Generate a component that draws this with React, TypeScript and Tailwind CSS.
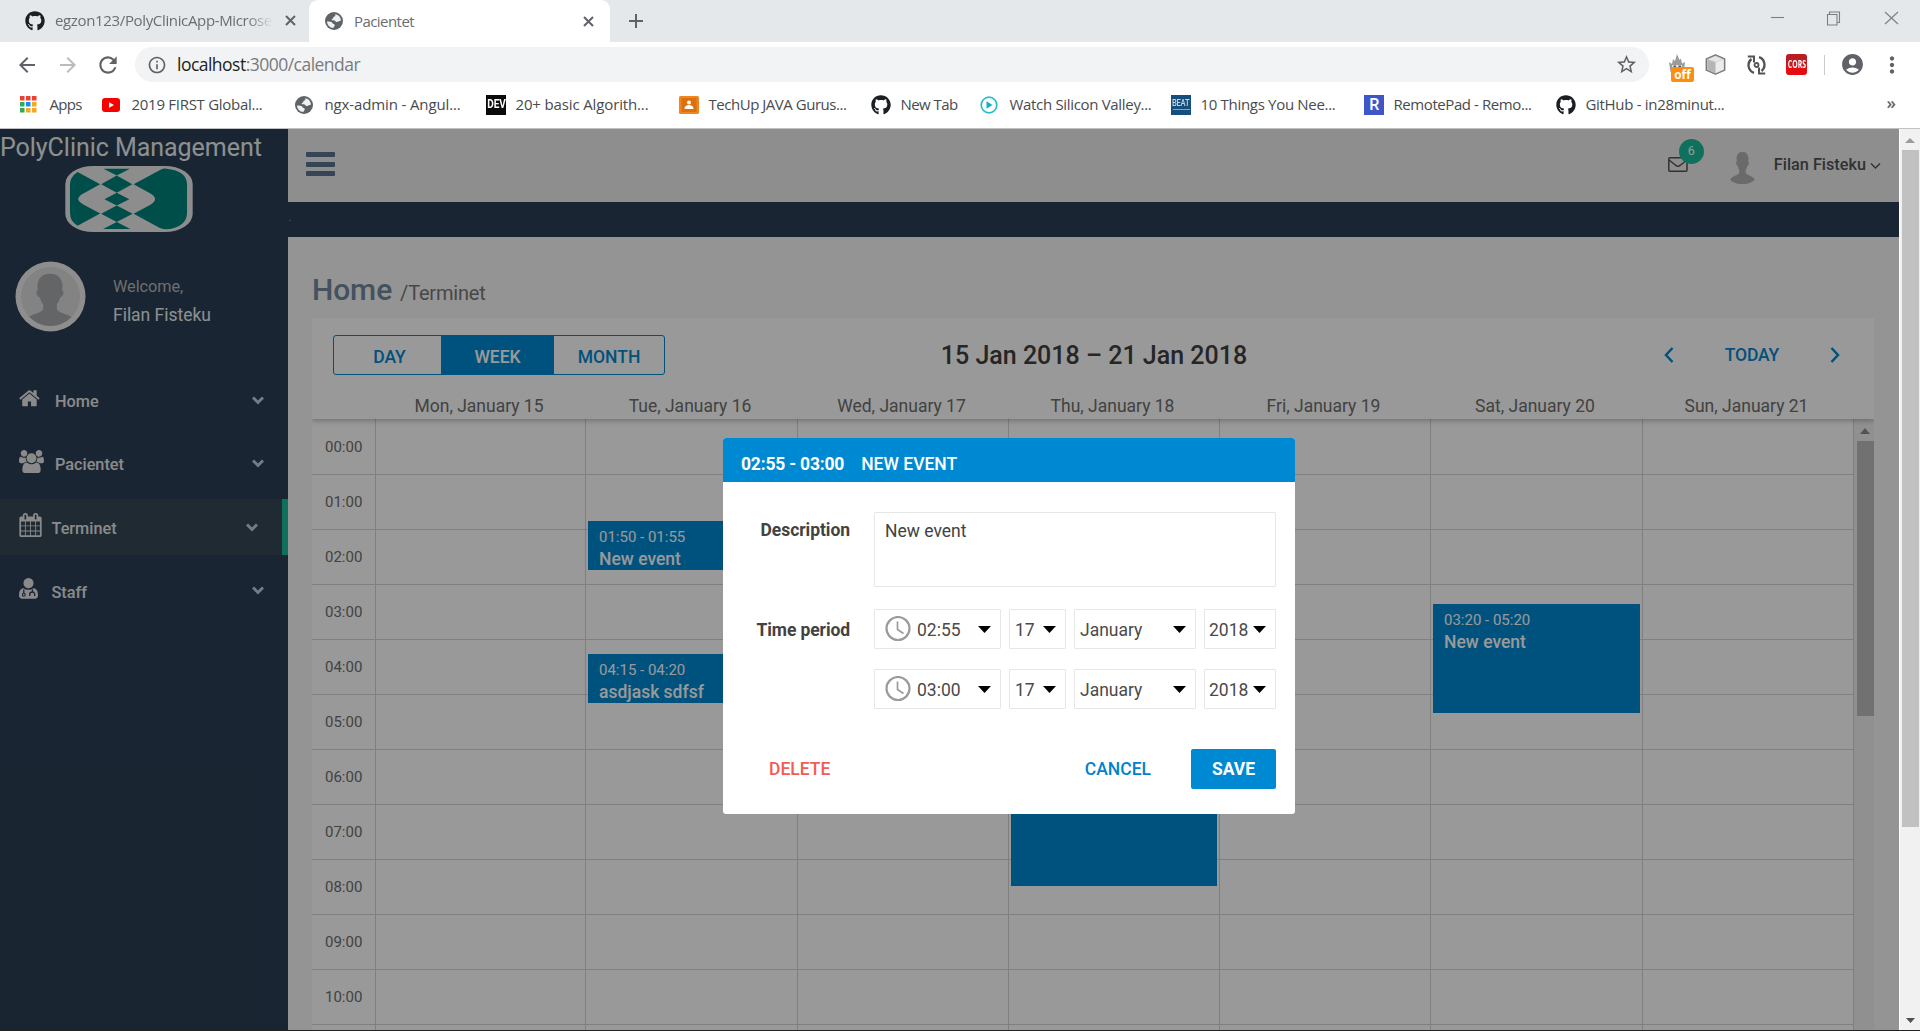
import React from "react";
import { MdAccountCircle, MdArrowBack, MdArrowForward, MdInfoOutline, MdMoreVert, MdRefresh, MdStarBorder } from "react-icons/md";
import { FaGithub } from "react-icons/fa";

/* ---------- browser chrome ---------- */

const CrossIcon = () => (
  <svg width="11" height="11" viewBox="0 0 11 11" stroke="#5f6368" strokeWidth="2" fill="none">
    <path d="M1 1l9 9M10 1l-9 9" />
  </svg>
);

const GlobeIcon = () => (
  <svg className="shrink-0" width="18" height="18" viewBox="0 0 18 18">
    <circle cx="9" cy="9" r="9" fill="#5f6368" />
    <path d="M9.500 2.200C11 3 10.500 4 9.300 4.600C8 5.200 8.600 6.400 7.400 6.900C6 7.400 6.400 8.300 8 8.300C10.500 8.300 10.200 10 12 10C13.500 10 14 9 16 8.600A7.200 7.200 0 0 0 9.500 2.200Z" fill="#eef0f1" />
    <path d="M1.900 9.600C4 9.800 6.800 9.600 7.400 11C7.900 12.200 9.800 11.800 9.800 13.200C9.800 14.400 8.600 14.600 8.400 16.100A7.200 7.200 0 0 1 1.900 9.600Z" fill="#eef0f1" />
  </svg>
);

function TabStrip() {
  return (
    <div className="flex h-[42px] bg-[#e5e8eb] text-[15px] text-[#6a6d72]">
      <div className="flex h-[41px] w-[309px] items-center pl-[25px]">
        <FaGithub className="size-[20px] shrink-0 text-[#1b1f23]" />
        <span className="ml-[10px] w-[218px] overflow-hidden whitespace-nowrap tracking-[-0.35px] [mask-image:linear-gradient(to_right,black_88%,transparent)]">
          egzon123/PolyClinicApp-Microse
        </span>
        <span className="ml-[12px]">
          <CrossIcon />
        </span>
      </div>
      <div className="flex h-[42px] w-[301px] items-center rounded-t-[9px] bg-white pl-[16px]">
        <GlobeIcon />
        <span className="ml-[11px] w-[229px] tracking-[-0.56px]">Pacientet</span>
        <CrossIcon />
      </div>
      <div className="flex h-[41px] flex-1 items-center pl-[19px]">
        <svg width="14" height="14" viewBox="0 0 14 14" stroke="#5f6368" strokeWidth="2" fill="none">
          <path d="M7 0v14M0 7h14" />
        </svg>
      </div>
      <div className="flex h-[36px] w-[149px] items-center text-[#7b7e82]">
        <svg width="128" height="16" viewBox="0 0 128 16" fill="none" stroke="currentColor" strokeWidth="1.1">
          <path d="M0 7.500h13" />
          <path d="M56.500 4.500h9.500v10.500h-9.500zM58.500 4.500v-2.500h10v10.500h-2.500" />
          <path d="M114 2l13 12M127 2l-13 12" />
        </svg>
      </div>
    </div>
  );
}

const FlameIcon = () => (
  <div className="relative h-[36px] w-[25px]">
    <svg className="absolute left-0 top-[7px]" width="17" height="18" viewBox="0 0 17 18">
      <path d="M1.500 18L0 8l3 2 1-5 2 2 2-7 2.500 6 1.500-1.500 1 5 3-1.500L15 18z" fill="#9a9c9e" />
      <path d="M3 11h10v7H3z" fill="#e2e2e2" />
      <path d="M4.500 11.500h2.500v3h-2.500zM9.500 11.500h2.500v3h-2.500z" fill="#55585c" />
    </svg>
    <span className="absolute left-[2px] top-[20px] flex h-[15px] w-[23px] items-center justify-center rounded-[2px] bg-[#ff8c0a] font-['Open_Sans'] text-[12px] leading-[15px] font-bold text-white">
      off
    </span>
  </div>
);

const CubeIcon = () => (
  <svg width="21" height="21" viewBox="0 0 21 21">
    <path d="M10.500 .8l9.200 4v11.400l-9.200 4-9.200-4V4.800z" fill="#cfcfcf" stroke="#7a7a7a" strokeWidth="1.400" strokeLinejoin="round" />
    <path d="M10.500 2.200l7 3-6 2.500-8-2.500z" fill="#e6e6e6" />
    <path d="M11 8.500l7.500-3v10l-7.500 3.400z" fill="#ececec" />
    <path d="M10 8.500l-7.500-3v10l7.500 3.400z" fill="#b5b5b5" />
  </svg>
);

const SyncIcon = () => (
  <svg width="19" height="20" viewBox="0 0 19 20" fill="none" stroke="#515357" strokeWidth="2.300">
    <path d="M7 17.800A8 8 0 0 1 4.500 4M12 2.200A8 8 0 0 1 14.500 16" />
    <path d="M.8 1.500h6.200v6M18.200 18.500H12v-6" strokeWidth="2" />
    <circle cx="9.500" cy="10" r="2" strokeWidth="1.800" />
  </svg>
);

function Toolbar() {
  return (
    <div className="flex h-[44px] items-center bg-white pt-px text-[#5f6368]">
      <MdArrowBack className="ml-[15px] size-[24px]" />
      <MdArrowForward className="ml-[17px] size-[24px] text-[#b9bbbe]" />
      <MdRefresh className="ml-[15px] size-[26px]" />
      <div className="ml-[14px] flex h-[35px] w-[1514px] items-center rounded-full bg-[#f1f3f4]">
        <MdInfoOutline className="ml-[12px] size-[20px]" />
        <div className="ml-[10px] flex-1 text-[17.5px] tracking-[-0.52px] text-[#787b7f]">
          <span className="text-[#1e1f21]">localhost</span>:3000/calendar
        </div>
        <MdStarBorder className="mr-[11px] size-[23px]" />
      </div>
      <div className="ml-[20px]">
        <FlameIcon />
      </div>
      <div className="ml-[11px]">
        <CubeIcon />
      </div>
      <div className="ml-[21px]">
        <SyncIcon />
      </div>
      <div className="ml-[20px] flex h-[21px] w-[21px] items-center justify-center rounded-[3px] bg-gradient-to-b from-[#b91c22] from-40% to-[#e60b12] to-60%">
        <span className="scale-x-[.65] font-['Open_Sans'] text-[10.500px] font-bold text-white">CORS</span>
      </div>
      <div className="ml-[17px] h-[20px] w-px bg-[#c9cbce]" />
      <MdAccountCircle className="ml-[15px] size-[25px]" />
      <MdMoreVert className="ml-[14px] size-[26px]" />
    </div>
  );
}

const AppsIcon = () => (
  <svg width="17" height="17" viewBox="0 0 17 17">
    {["#ea4335", "#ea4335", "#ea4335", "#34a853", "#1a8cf0", "#f5a623", "#34a853", "#f5a623", "#f5a623"].map((c, i) => (
      <rect key={i} x={(i % 3) * 6} y={Math.floor(i / 3) * 6} width="4.500" height="4.500" fill={c} />
    ))}
  </svg>
);
const YoutubeIcon = () => (
  <svg width="18" height="14" viewBox="0 0 18 14">
    <rect width="18" height="14" rx="3" fill="#f60000" />
    <path d="M7 4.200l5 2.800-5 2.800z" fill="#fff" />
  </svg>
);
const ClassroomIcon = () => (
  <svg width="20" height="18" viewBox="0 0 20 18">
    <rect width="20" height="18" rx="1.500" fill="#ef8520" />
    <rect x="2.500" y="2" width="15" height="14" fill="#dd6f0c" />
    <circle cx="10" cy="6.500" r="2" fill="#fff" />
    <path d="M5.500 13c0-3 2-4 4.500-4s4.500 1 4.500 4z" fill="#fff" />
  </svg>
);
const PlayIcon = () => (
  <svg width="18" height="18" viewBox="0 0 18 18">
    <circle cx="9" cy="9" r="7.800" fill="none" stroke="#27bccb" strokeWidth="1.700" />
    <path d="M6.500 5.200l6 3.800-6 3.800z" fill="#12b2c4" />
  </svg>
);
const DevIcon = () => (
  <span className="flex size-[20px] items-center justify-center bg-[#0a0a0a]">
    <span className="scale-x-[.8] font-['Roboto'] text-[12.500px] font-bold text-white">DEV</span>
  </span>
);
const BeatIcon = () => (
  <span className="flex size-[20px] flex-col items-center justify-center bg-[#174f7c]">
    <span className="scale-x-90 font-['Roboto'] text-[8.500px] leading-[9px] font-medium text-[#c3d6e2]">BEAT</span>
    <span className="mt-px h-px w-[17px] bg-[#a7a55b]" />
  </span>
);
const RIcon = () => (
  <span className="flex size-[20px] items-center justify-center bg-[#3f56c8] font-['Roboto'] text-[16px] font-medium text-white">R</span>
);

function Bookmark({ icon, label, className }: { icon: React.ReactNode; label: string; className: string }) {
  return (
    <div className={`flex shrink-0 items-center ${className}`}>
      <span className="flex w-[20px] justify-start">{icon}</span>
      <span className="ml-[9.500px] whitespace-nowrap">{label}</span>
    </div>
  );
}

function Bookmarks() {
  const github = <FaGithub className="size-[20px] text-[#1b1f23]" />;
  return (
    <div className="flex h-[43px] items-center border-b border-[#bfc1c3] bg-white pb-[5px] pl-[20px] text-[15px] text-[#484b4f]">
      <Bookmark className="w-[82px] tracking-[-0.7px]" icon={<AppsIcon />} label="Apps" />
      <Bookmark className="w-[193px] tracking-[-0.28px]" icon={<YoutubeIcon />} label="2019 FIRST Global..." />
      <Bookmark className="w-[191px] tracking-[-0.13px]" icon={<GlobeIcon />} label="ngx-admin - Angul..." />
      <Bookmark className="w-[193px] tracking-[-0.14px]" icon={<DevIcon />} label="20+ basic Algorith..." />
      <Bookmark className="w-[192px] tracking-[-0.47px]" icon={<ClassroomIcon />} label="TechUp JAVA Gurus..." />
      <Bookmark className="w-[109px] tracking-[-0.57px]" icon={github} label="New Tab" />
      <Bookmark className="w-[191px] tracking-[-0.32px]" icon={<PlayIcon />} label="Watch Silicon Valley..." />
      <Bookmark className="w-[193px] tracking-[-0.31px]" icon={<BeatIcon />} label="10 Things You Nee..." />
      <Bookmark className="w-[192px] tracking-[-0.42px]" icon={<RIcon />} label="RemotePad - Remo..." />
      <Bookmark className="flex-1 tracking-[-0.31px]" icon={github} label="GitHub - in28minut..." />
      <span className="mr-[24px] pb-[3px] text-[17px] font-semibold text-[#5f6368]">»</span>
    </div>
  );
}

/* ---------- sidebar ---------- */

const ClinicLogo = () => (
  <svg width="128" height="66" viewBox="195 122 384 199">
    <rect x="195" y="122" width="384" height="199" rx="84" ry="54" fill="#ececec" />
    <g fill="#00827c">
      <path d="M232 140L300 177L248 206Q220 222 248 237L300 265L232 302Q209 290 209 262V178Q209 155 232 140Z" />
      <path d="M310 130H390L350 151Z" />
      <path d="M350 151L397 177L350 203L303 177Z" />
      <path d="M350 203L388 222L350 241L313 222Z" />
      <path d="M350 241L398 266L350 291L303 266Z" />
      <path d="M350 291L391 312H309Z" />
      <path d="M401 177L482 133Q490 129 500 130Q562 136 562 178V262Q562 306 500 313Q490 313 480 309L401 266L453 238Q478 222 453 206Z" />
    </g>
  </svg>
);

const Silhouette = ({ fill }: { fill: string }) => (
  <path
    fill={fill}
    d="M50 12C37 12 28 20 28 34C28 37 29 39 29 41C26 41 26 45 27 48C28 52 30 53 32 53C34 60 36 63 38 65V74C34 82 16 81 4 94C22 112 78 112 96 94C84 81 66 82 62 74V65C64 63 66 60 68 53C70 53 72 52 73 48C74 45 74 41 71 41C71 39 72 37 72 34C72 20 63 12 50 12Z"
  />
);

const Avatar = () => (
  <svg width="71" height="71" viewBox="0 0 71 71">
    <circle cx="35.500" cy="35.500" r="35" fill="#ededed" />
    <circle cx="35.500" cy="35.500" r="29.500" fill="#dadada" />
    <clipPath id="avatar-face">
      <circle cx="35.500" cy="35.500" r="29.500" />
    </clipPath>
    <g clipPath="url(#avatar-face)">
      <g transform="translate(6.500 6) scale(.57 .57)">
        <Silhouette fill="#a7a9ab" />
      </g>
    </g>
  </svg>
);

const HomeIcon = () => (
  <svg width="22.500" height="22.500" viewBox="0 0 1792 1792" fill="currentColor">
    <path d="M1408 992v480q0 26-19 45t-45 19h-384v-384h-256v384h-384q-26 0-45-19t-19-45v-480q0-1 .5-3t.5-3l575-474 575 474q1 2 1 6zm223-69l-62 74q-8 9-21 11h-3q-13 0-21-7l-692-577-692 577q-12 8-24 7-13-2-21-11l-62-74q-8-10-7-23.500t11-21.500l719-599q32-26 76-26t76 26l244 204v-195q0-14 9-23t23-9h192q14 0 23 9t9 23v408l219 182q10 8 11 21.500t-7 23.500z" />
  </svg>
);
const GroupIcon = () => (
  <svg width="25" height="23.300" viewBox="-64 0 1920 1792" fill="currentColor">
    <path transform="translate(-64 0)" d="M593 896q-162 5-265 128h-134q-82 0-138-40.500t-56-118.500q0-353 124-353 6 0 43.500 21t97.500 42.500 119 21.500q67 0 133-23-5 37-5 66 0 139 81 256zm1071 637q0 120-73 189.500t-194 69.500h-874q-121 0-194-69.500t-73-189.500q0-53 3.500-103.500t14-109 26.500-108.500 43-97.500 62-81 85.500-53.500 111.500-20q10 0 43 21.500t73 48 107 48 135 21.500 135-21.500 107-48 73-48 43-21.500q61 0 111.500 20t85.500 53.500 62 81 43 97.500 26.500 108.500 14 109 3.500 103.500zm-1024-1277q0 106-75 181t-181 75-181-75-75-181 75-181 181-75 181 75 75 181zm704 384q0 159-112.500 271.500t-271.500 112.500-271.500-112.500-112.500-271.500 112.500-271.500 271.500-112.500 271.500 112.500 112.500 271.500zm576 225q0 78-56 118.500t-138 40.500h-134q-103-123-265-128 81-117 81-256 0-29-5-66 66 23 133 23 59 0 119-21.500t97.500-42.500 43.500-21q124 0 124 353zm-128-609q0 106-75 181t-181 75-181-75-75-181 75-181 181-75 181 75 75 181z" />
  </svg>
);
const CalendarIcon = () => (
  <svg width="23" height="24" viewBox="64 0 1664 1792" fill="currentColor">
    <path d="M192 1664h288v-288h-288v288zm352 0h320v-288h-320v288zm-352-352h288v-320h-288v320zm352 0h320v-320h-320v320zm-352-384h288v-288h-288v288zm736 736h320v-288h-320v288zm-384-736h320v-288h-320v288zm768 736h288v-288h-288v288zm-384-352h320v-320h-320v320zm-352-864v-288q0-13-9.500-22.500t-22.500-9.500h-64q-13 0-22.500 9.500t-9.500 22.500v288q0 13 9.500 22.500t22.500 9.500h64q13 0 22.500-9.500t9.500-22.500zm736 864h288v-320h-288v320zm-384-384h320v-288h-320v288zm384 0h288v-288h-288v288zm32-480v-288q0-13-9.500-22.500t-22.500-9.500h-64q-13 0-22.500 9.500t-9.500 22.500v288q0 13 9.500 22.500t22.500 9.500h64q13 0 22.500-9.500t9.500-22.500zm384-64v1280q0 52-38 90t-90 38h-1408q-52 0-90-38t-38-90v-1280q0-52 38-90t90-38h128v-96q0-66 47-113t113-47h64q66 0 113 47t47 113v96h384v-96q0-66 47-113t113-47h64q66 0 113 47t47 113v96h128q52 0 90 38t38 90z" />
  </svg>
);
const DoctorIcon = () => (
  <svg width="19" height="21" viewBox="0 0 19 21" fill="none">
    <path d="M9.500 0a5 5 0 0 1 5 5.200c0 2.800-2.200 5-5 5s-5-2.200-5-5a5 5 0 0 1 5-5.200z" fill="currentColor" />
    <path d="M4.500 10.200c1.500 1 3 1.600 5 1.600s3.500-.6 5-1.600c3.500.3 4.500 3.500 4.500 7.300 0 2-1.200 3.200-3 3.200H3c-1.800 0-3-1.200-3-3.200 0-3.800 1-7 4.500-7.300z" fill="currentColor" />
    <path d="M4.800 11.500v4M13.500 11.500v2.800M10.700 18v-1.500a2.500 2.500 0 0 1 5 0V18" stroke="#2a3f54" strokeWidth="1.300" />
    <circle cx="4.800" cy="16.700" r="1.400" stroke="#2a3f54" strokeWidth="1.100" />
  </svg>
);

type MenuEntry = { label: string; icon: React.ReactNode; slot: string; active?: boolean };
const menu: MenuEntry[] = [
  { label: "Home", icon: <HomeIcon />, slot: "w-[36px]" },
  { label: "Pacientet", icon: <GroupIcon />, slot: "w-[36px]" },
  { label: "Terminet", icon: <CalendarIcon />, slot: "w-[32.500px]", active: true },
  { label: "Staff", icon: <DoctorIcon />, slot: "w-[32.500px]" },
];

function Sidebar() {
  return (
    <aside className="flex w-[288px] shrink-0 flex-col bg-[#2a3f54] text-[#ecf0f1]">
      <div className="pt-[4px] text-[25px] leading-[29px] tracking-[-0.04px] whitespace-nowrap">PolyClinic Management</div>
      <div className="mt-[4px] ml-[65px]">
        <ClinicLogo />
      </div>
      <div className="mt-[29px] flex h-[71px] pl-[15px]">
        <Avatar />
        <div className="ml-[27px] pt-[13px]">
          <div className="text-[16.25px] leading-[25px] tracking-[-0.05px] text-[#bab8b8]">Welcome,</div>
          <div className="mt-[2px] text-[17.500px] leading-[28px] tracking-[-0.02px]">Filan Fisteku</div>
        </div>
      </div>
      <nav className="mt-[40px] flex flex-col gap-[7.670px]">
        {menu.map((m) => (
          <div
            key={m.label}
            className={`flex h-[56px] items-center pl-[19px] text-[16.25px] font-medium text-[#e7e7e7] ${m.active ? "border-r-[6px] border-[#1abb9c] bg-[#344656]" : ""}`}
          >
            <span className={`flex ${m.slot} pb-[4px]`}>{m.icon}</span>
            <span className="flex-1 pt-[4px]">{m.label}</span>
            <svg className="mr-[24px]" width="12" height="9" viewBox="0 0 12 9" fill="none" stroke="#c4cfda" strokeWidth="3">
              <path d="M1 1.500l5 5 5-5" />
            </svg>
          </div>
        ))}
      </nav>
    </aside>
  );
}

/* ---------- top bar ---------- */

function TopBar() {
  return (
    <header className="flex h-[73px] items-center bg-[#ededed] pl-[18px]">
      <div className="mb-[3px] flex w-[29px] flex-col gap-[4.500px]">
        <span className="h-[5px] rounded-[1px] bg-[#5a738e]" />
        <span className="h-[5px] rounded-[1px] bg-[#5a738e]" />
        <span className="h-[5px] rounded-[1px] bg-[#5a738e]" />
      </div>
      <div className="flex-1" />
      <div className="relative mb-[2px] h-[15px] w-[20px]">
        <svg width="20" height="15" viewBox="0 0 20 15" fill="none" stroke="#515356" strokeWidth="1.500">
          <rect x=".8" y=".8" width="18.200" height="13.400" rx="1" />
          <path d="M1 3l7 5.500q2 1.300 4 0L19 3" />
        </svg>
        <span className="absolute -top-[18px] left-[11px] flex size-[25px] items-center justify-center rounded-full bg-[#1abb9c] text-[12.500px] text-white">6</span>
      </div>
      <svg className="mt-[4px] ml-[41px]" width="27" height="33" viewBox="0 10 100 97" preserveAspectRatio="none">
        <Silhouette fill="#b0b1b2" />
      </svg>
      <span className="ml-[18px] text-[16.25px] font-medium text-[#515356]">Filan Fisteku</span>
      <svg className="mr-[18px] ml-[4px]" width="11" height="8" viewBox="0 0 11 8" fill="none" stroke="#515356" strokeWidth="1.400">
        <path d="M1 1.500l4.500 4.500 4.500-4.500" />
      </svg>
    </header>
  );
}

/* ---------- calendar ---------- */

const hours = ["00:00", "01:00", "02:00", "03:00", "04:00", "05:00", "06:00", "07:00", "08:00", "09:00", "10:00"];
type CalEvent = { time?: string; title?: string; box: string };
const days: { label: string; width: string; events: CalEvent[] }[] = [
  { label: "Mon, January 15", width: "w-[210px]", events: [] },
  {
    label: "Tue, January 16",
    width: "w-[212px]",
    events: [
      { time: "01:50 - 01:55", title: "New event", box: "top-[102px] h-[49px]" },
      { time: "04:15 - 04:20", title: "asdjask sdfsf", box: "top-[235px] h-[49px]" },
    ],
  },
  { label: "Wed, January 17", width: "w-[211px]", events: [] },
  { label: "Thu, January 18", width: "w-[211px]", events: [{ box: "top-[340px] h-[127px]" }] },
  { label: "Fri, January 19", width: "w-[211px]", events: [] },
  { label: "Sat, January 20", width: "w-[212px]", events: [{ time: "03:20 - 05:20", title: "New event", box: "top-[185px] h-[109px]" }] },
  { label: "Sun, January 21", width: "w-[211px]", events: [] },
];

function CalendarToolbar() {
  return (
    <div className="grid h-[74px] grid-cols-[1fr_auto_1fr] items-start pt-[17px] text-[17.500px] font-medium text-[#0288d1]">
      <div className="ml-[21px] flex h-[40px] w-[332px] overflow-hidden rounded-[3px] border border-[#0288d1] leading-[42px]">
        <span className="w-[107px] pl-[4px] text-center">DAY</span>
        <span className="w-[113px] bg-[#0089d3] text-center text-white">WEEK</span>
        <span className="w-[110px] text-center">MONTH</span>
      </div>
      <div className="ml-[2px] text-[25px] leading-[41px] text-[#404040]">15 Jan 2018 – 21 Jan 2018</div>
      <div className="flex h-[40px] items-center justify-end">
        <svg width="10" height="18" viewBox="0 0 10 18" fill="none" stroke="currentColor" strokeWidth="2.500">
          <path d="M8.500 2L2 9l6.500 7" />
        </svg>
        <span className="mx-[51px] tracking-[-0.15px]">TODAY</span>
        <svg className="mr-[34px]" width="10" height="18" viewBox="0 0 10 18" fill="none" stroke="currentColor" strokeWidth="2.500">
          <path d="M1.500 2L8 9l-6.500 7" />
        </svg>
      </div>
    </div>
  );
}

function Calendar() {
  return (
    <section className="mr-[25px] ml-[24px] flex h-[712px] flex-col overflow-hidden bg-white">
      <div className="relative z-10 shrink-0 bg-white shadow-[0_2px_5px_rgba(0,0,0,0.25)]">
        <CalendarToolbar />
        <div className="flex h-[27px] pl-[62px] text-[17.500px] leading-[29px] text-[#6e6e6d]">
          {days.map((d) => (
            <span key={d.label} className={`shrink-0 text-center ${d.width}`}>
              {d.label}
            </span>
          ))}
        </div>
      </div>
      <div className="flex min-h-0 flex-1">
        <div className="w-[63px] shrink-0 text-[15px] text-[#6e6e6d]">
          {hours.map((h) => (
            <div key={h} className="h-[55px] border-b border-[#d4d4d4] pl-[13px] leading-[54px] first:h-[56px] first:leading-[56px]">
              {h}
            </div>
          ))}
        </div>
        {days.map((d) => (
          <div key={d.label} className={`relative shrink-0 border-l border-[#d4d4d4] ${d.width}`}>
            {hours.map((h) => (
              <div key={h} className="h-[55px] border-b border-[#d4d4d4] first:h-[56px]" />
            ))}
            {d.events.map((e) => (
              <div key={e.box} className={`absolute right-[2px] left-[2px] overflow-hidden bg-[#0089d3] pt-[4px] pl-[11px] text-white ${e.box}`}>
                <div className="text-[15px] leading-[24px]">{e.time}</div>
                <div className="text-[17.500px] leading-[21px] font-medium">{e.title}</div>
              </div>
            ))}
          </div>
        ))}
        <div className="flex w-[21px] shrink-0 flex-col items-end border-l border-[#d4d4d4] bg-[#f1f1f1]">
          <svg className="mt-[9px] mr-[4px]" width="10" height="6" viewBox="0 0 10 6" fill="#8a8a8a">
            <path d="M0 6l5-6 5 6z" />
          </svg>
          <div className="mt-[7px] h-[275px] w-[17px] bg-[#bdbdbd]" />
        </div>
      </div>
    </section>
  );
}

/* ---------- event dialog ---------- */

const Caret = () => (
  <svg width="13" height="7" viewBox="0 0 13 7">
    <path d="M0 0h13L6.500 7z" fill="#000" />
  </svg>
);

function Picker({ children, className }: { children: React.ReactNode; className: string }) {
  return (
    <div className={`flex h-[40px] items-center justify-between rounded-[1px] border border-[#e6e6e6] text-[#4a4a4a] ${className}`}>
      {children}
      <Caret />
    </div>
  );
}

function PeriodRow({ time, label }: { time: string; label?: string }) {
  return (
    <div className="flex items-center">
      <div className="w-[127px] pt-[2px] text-right font-bold tracking-[-0.1px]">{label}</div>
      <div className="ml-[24px] flex w-[402px] justify-between">
        <Picker className="w-[127px] pr-[9px] pl-[9.500px]">
          <span className="flex items-center">
            <svg width="26" height="26" viewBox="0 0 26 26" fill="none" stroke="#9b9b9b">
              <circle cx="13" cy="12.500" r="11.500" strokeWidth="2.200" />
              <path d="M12.500 5.500v8l6 4" strokeWidth="1.700" />
            </svg>
            <span className="ml-[6.500px] pt-[2px]">{time}</span>
          </span>
        </Picker>
        <Picker className="w-[57px] pr-[9px] pl-[5px]">
          <span className="pt-[2px]">17</span>
        </Picker>
        <Picker className="w-[122px] pr-[9px] pl-[5px]">
          <span className="pt-[2px]">January</span>
        </Picker>
        <Picker className="w-[72px] pr-[9px] pl-[4px]">
          <span className="pt-[2px]">2018</span>
        </Picker>
      </div>
    </div>
  );
}

function EventDialog() {
  return (
    <div className="h-[376px] w-[572px] overflow-hidden rounded-[3px] bg-white text-[17.500px] text-[#424242]">
      <div className="flex h-[44px] bg-[#0089d3] pt-[5px] pl-[18px] leading-[42px] text-white">
        <span className="font-bold tracking-[-0.2px]">02:55 - 03:00</span>
        <span className="ml-[17px] font-medium">NEW EVENT</span>
      </div>
      <div className="mt-[30px] flex">
        <div className="w-[127px] text-right leading-[37px] font-bold tracking-[-0.05px]">Description</div>
        <div className="ml-[24px] h-[75px] w-[402px] rounded-[1px] border border-[#e6e6e6] pl-[10px] leading-[36px]">New event</div>
      </div>
      <div className="mt-[22px] flex flex-col gap-[20px]">
        <PeriodRow time="02:55" label="Time period" />
        <PeriodRow time="03:00" />
      </div>
      <div className="mt-[40px] flex leading-[40px] font-medium text-[#0082cc]">
        <span className="ml-[46px] text-[#f25c52]">DELETE</span>
        <span className="flex-1" />
        <span>CANCEL</span>
        <span className="mr-[19px] ml-[40px] w-[85px] rounded-[2px] bg-[#0089d3] text-center font-bold text-white">SAVE</span>
      </div>
    </div>
  );
}

function PageScrollbar() {
  return (
    <div className="flex w-[21px] shrink-0 flex-col items-center border-l border-white bg-[#f1f1f1]">
      <svg className="mt-[9px]" width="10" height="5" viewBox="0 0 10 5" fill="#9b9b9b">
        <path d="M0 5l5-5 5 5z" />
      </svg>
      <div className="mt-[7px] h-[677px] w-[17px] bg-[#c1c1c1]" />
      <svg className="mt-auto mb-[7px]" width="9" height="5" viewBox="0 0 9 5" fill="#505050">
        <path d="M0 0h9L4.500 5z" />
      </svg>
    </div>
  );
}

export default function App() {
  return (
    <div className="flex h-[1031px] w-[1920px] flex-col overflow-hidden bg-[#222222] font-['Open_Sans',sans-serif]">
      <TabStrip />
      <Toolbar />
      <Bookmarks />
      <div className="flex h-[901px] font-['Roboto',sans-serif]">
        <div className="relative flex flex-1 overflow-hidden">
          <Sidebar />
          <main className="flex min-w-0 flex-1 flex-col bg-[#f7f7f7]">
            <TopBar />
            <div className="h-[35px] bg-[#2a3f54] text-[15px] leading-[28px] text-[#73879c]">.</div>
            <div className="flex h-[81px] items-baseline pt-[33px] pl-[24px] whitespace-nowrap">
              <span className="text-[30px] leading-[40px] font-medium tracking-[-0.1px] text-[#73879c]">Home</span>
              <span className="ml-[8px] text-[20px] tracking-[-0.2px] text-[#777777]">/Terminet</span>
            </div>
            <Calendar />
          </main>
          <div className="absolute inset-0 z-20 bg-black/40 pt-[309px] pl-[723px]">
            <EventDialog />
          </div>
        </div>
        <PageScrollbar />
      </div>
    </div>
  );
}
